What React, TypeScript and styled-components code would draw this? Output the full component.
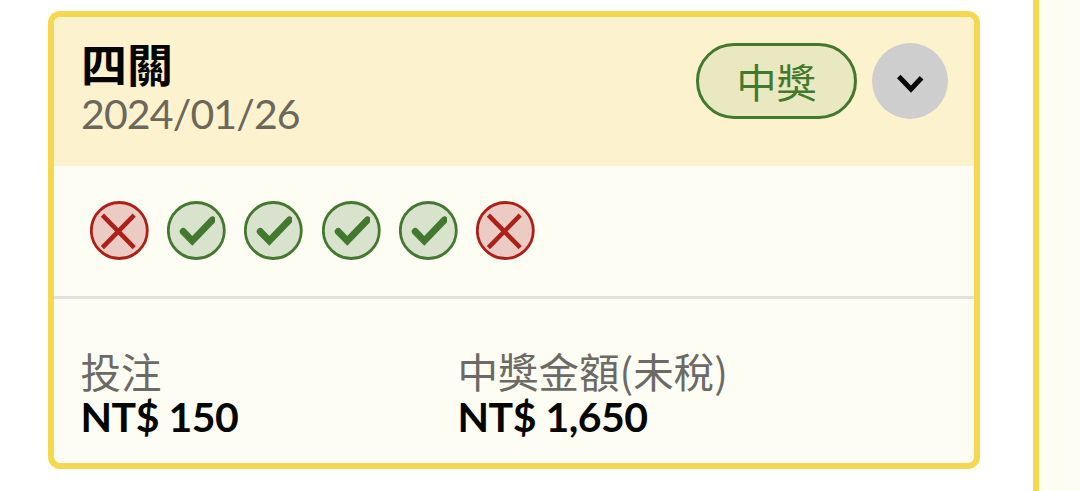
import React from "react";
import styled, { createGlobalStyle } from "styled-components";

const Global = createGlobalStyle`
  * { box-sizing: border-box; }
  body { margin: 0; background: #fff; font-family: Lato, "Noto Sans CJK TC", sans-serif; overflow: hidden; }
`;
const Page = styled.div`
  display: flex; justify-content: space-between; height: 491px; overflow: hidden;
`;
const Card = styled.article`
  width: 932px; height: 458px; margin: 11px 0 0 48px;
  border: 6px solid #f6d850; border-radius: 12px; background: #fefdf3;
  display: flex; flex-direction: column; overflow: hidden;
`;
const NextCard = styled.aside`
  width: 47px; height: 491px; border-left: 6px solid #f6d850; background: #fdfdf4;
`;
const Header = styled.header`
  height: 149px; padding: 26px 26px 0 27px; background: #fdf2ce;
  display: flex; align-items: flex-start;
`;
const Heading = styled.div`flex: 1; margin-top: -2px;`;
const Title = styled.h2`
  margin: 0; font-size: 46px; line-height: 47px; font-weight: 700; color: #050503;
`;
const DateText = styled.div`
  font-size: 41px; line-height: 52px; letter-spacing: -0.85px; color: #6b675b;
`;
const Badge = styled.span`
  width: 161px; height: 76px; margin-right: 15px; border: 3px solid #43782f; border-radius: 38px;
  background: #e9e8c0; color: #43782f; font-size: 40px; line-height: 70px; text-align: center;
  font-family: "Noto Sans CJK TC", sans-serif;
`;
const Toggle = styled.button`
  width: 76px; height: 76px; padding: 0; border: 0; border-radius: 50%; background: #cecece;
  display: grid; place-items: center;
`;
const Results = styled.div`
  height: 133px; padding: 35px 0 0 36px; border-bottom: 3px solid #e2e2dc;
  display: flex; gap: 18.2px; align-items: flex-start;
`;
const Mark = styled.svg`width: 59px; height: 59px; flex: none; display: block;`;
const Amounts = styled.div`
  display: grid; grid-template-columns: 377px 1fr; padding: 50px 27px 0 26.5px;
`;
const Label = styled.div`
  font-family: "Noto Sans CJK TC", sans-serif; font-size: 40.5px; line-height: 43px; color: #6b6a66;
`;
const Value = styled.div`
  font-size: 41px; line-height: 49px; letter-spacing: -0.5px; font-weight: 700; color: #050503;
`;

const ResultMark = ({ win }: { win: boolean }) => (
  <Mark viewBox="0 0 59 59" fill="none">
    <circle cx="29.3" cy="29.5" r="28" fill={win ? "#d9e2cd" : "#eccbc5"} stroke={win ? "#43782f" : "#ac2017"} strokeWidth="2.8" />
    {win ? (
      <svg width="48" height="59">
        <path d="M16.2 30.5L25.3 39.8L45.5 18.8" stroke="#43782f" strokeWidth="6.9" strokeLinecap="round" />
      </svg>
    ) : (
      <path d="M12.4 14.2L44.2 46.6M44.2 14.2L12.4 46.6" stroke="#ac2017" strokeWidth="4.5" />
    )}
  </Mark>
);

const results = [false, true, true, true, true, false];

export default function App() {
  return (
    <Page>
      <Global />
      <Card>
        <Header>
          <Heading><Title>四關</Title><DateText>2024/01/26</DateText></Heading>
          <Badge>中獎</Badge>
          <Toggle aria-label="展開">
            <svg width="30" height="24" viewBox="0 0 30 24" fill="none">
              <path d="M3.8 7.6L16 20.2L26.6 8.8" stroke="#080808" strokeWidth="5" />
            </svg>
          </Toggle>
        </Header>
        <Results>{results.map((win, i) => <ResultMark key={i} win={win} />)}</Results>
        <Amounts>
          <div><Label>投注</Label><Value>NT$ 150</Value></div>
          <div><Label>中獎金額(未稅)</Label><Value>NT$ 1,650</Value></div>
        </Amounts>
      </Card>
      <NextCard />
    </Page>
  );
}
